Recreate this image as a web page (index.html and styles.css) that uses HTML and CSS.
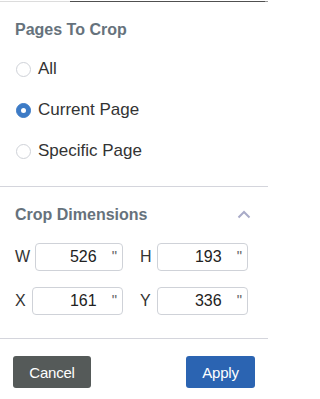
FILE: index.html
```html
<!DOCTYPE html>
<html>
<head>
<meta charset="utf-8">
<link rel="stylesheet" href="styles.css">
</head>
<body>
<div class="panel">
  <div class="topline"></div>
  <section class="section pages">
    <h2 class="heading">Pages To Crop</h2>
    <div class="radios">
      <label class="radio-row"><span class="radio"></span><span class="radio-label">All</span></label>
      <label class="radio-row"><span class="radio checked"></span><span class="radio-label">Current Page</span></label>
      <label class="radio-row"><span class="radio"></span><span class="radio-label">Specific Page</span></label>
    </div>
  </section>
  <div class="divider"></div>
  <section class="section dims">
    <div class="heading-row">
      <h2 class="heading">Crop Dimensions</h2>
      <svg class="chevron" width="14" height="9" viewBox="0 0 14 9"><polyline points="1.5,7.5 7,2 12.5,7.5" fill="none" stroke="#a9abc8" stroke-width="2"/></svg>
    </div>
    <div class="fields">
      <div class="field"><span class="flabel">W</span><div class="finput"><span class="fval">526</span><span class="unit">"</span></div></div>
      <div class="field"><span class="flabel">H</span><div class="finput"><span class="fval">193</span><span class="unit">"</span></div></div>
      <div class="field"><span class="flabel">X</span><div class="finput"><span class="fval">161</span><span class="unit">"</span></div></div>
      <div class="field"><span class="flabel">Y</span><div class="finput"><span class="fval">336</span><span class="unit">"</span></div></div>
    </div>
  </section>
  <div class="divider"></div>
  <div class="footer">
    <button class="btn cancel">Cancel</button>
    <button class="btn apply">Apply</button>
  </div>
</div>
</body>
</html>
```

FILE: styles.css
```css
html, body {
  margin: 0;
  padding: 0;
  background: #ffffff;
}
body {
  font-family: "Liberation Sans", Arial, sans-serif;
  width: 268px;
  color: #333;
}
.panel {
  width: 268px;
}
.topline {
  margin-top: 1px;
  height: 1px;
  background: linear-gradient(to right, #dcdcdc 0, #dcdcdc 70px, #505050 70px, #505050 265px, #9a9a9a 265px);
}
.heading {
  margin: 0;
  font-size: 16px;
  line-height: 18px;
  font-weight: bold;
  color: #66727c;
}
.pages {
  padding: 19px 15px 25px 15px;
}
.radios {
  display: flex;
  flex-direction: column;
  gap: 21px;
  margin-top: 20px;
}
.radio-row {
  display: flex;
  align-items: center;
  height: 20px;
}
.radio {
  box-sizing: border-box;
  width: 15px;
  height: 15px;
  border-radius: 50%;
  border: 1px solid #cfd2d8;
  margin-left: 1px;
  margin-right: 7px;
  background: #fff;
  position: relative;
}
.radio.checked {
  background: #3d7bc6;
  border-color: #3d7bc6;
}
.radio.checked::after {
  content: "";
  position: absolute;
  left: 50%;
  top: 50%;
  width: 5px;
  height: 5px;
  margin: -2.5px 0 0 -2.5px;
  border-radius: 50%;
  background: #fff;
}
.radio-label {
  font-size: 17px;
  line-height: 20px;
  color: #333;
}
.divider {
  height: 1px;
  background: #d4d5dc;
}
.dims {
  padding: 19px 0 23px 15px;
}
.heading-row {
  display: flex;
  align-items: center;
  justify-content: space-between;
  padding-right: 17px;
}
.chevron {
  display: block;
  margin-top: -1px;
}
.fields {
  margin-top: 19px;
  display: grid;
  grid-template-columns: 108px 108px;
  column-gap: 17px;
  row-gap: 16px;
}
.field {
  display: flex;
  align-items: center;
  gap: 5px;
}
.flabel {
  font-size: 16px;
  color: #333;
  min-width: 12px;
}
.finput {
  flex: 1;
  box-sizing: border-box;
  height: 28px;
  border: 1px solid #cfd2d8;
  border-radius: 4px;
  display: flex;
  align-items: center;
  justify-content: flex-end;
  padding-right: 5px;
}
.fval {
  font-size: 16px;
  color: #222;
}
.unit {
  font-size: 15px;
  color: #666;
  margin-left: 15px;
  position: relative;
  top: -2px;
}
.footer {
  display: flex;
  justify-content: space-between;
  padding: 17px 13px 0 13px;
}
.btn {
  font-family: "Liberation Sans", Arial, sans-serif;
  font-size: 15px;
  height: 32px;
  border: none;
  border-radius: 3px;
  color: #fff;
  padding: 0;
  letter-spacing: -0.2px;
}
.cancel {
  width: 78px;
  background: #555a59;
}
.apply {
  width: 69px;
  background: #2b64b2;
}
```
